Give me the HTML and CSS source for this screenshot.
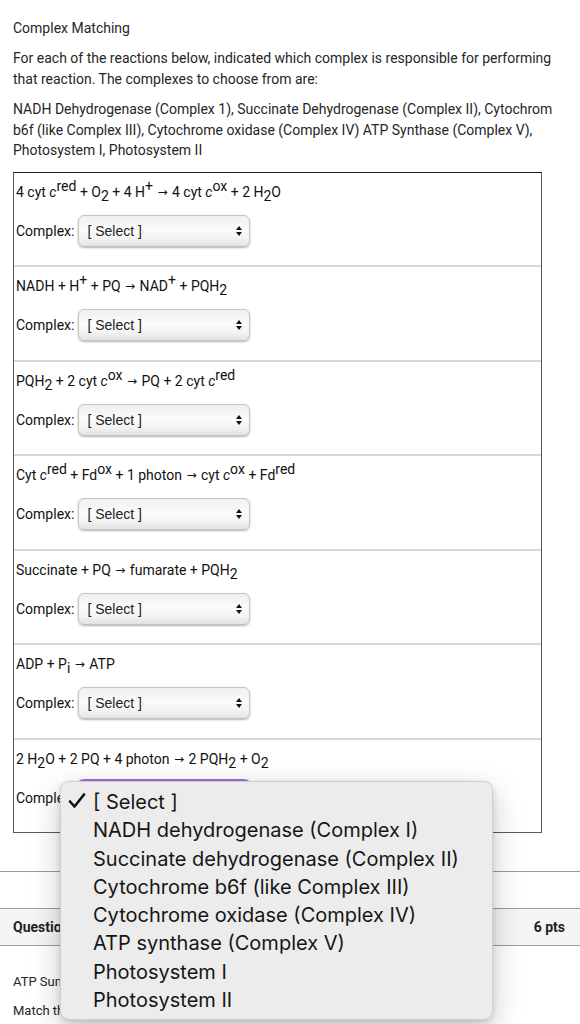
FILE: index.html
```html
<!DOCTYPE html>
<html>
<head>
<meta charset="utf-8">
<link rel="stylesheet" href="styles.css">
</head>
<body>
<div class="page">
  <div class="content">
    <p class="title">Complex Matching</p>
    <p class="para">For each of the reactions below, indicated which complex is responsible for performing that reaction. The complexes to choose from are:</p>
    <p class="para">NADH Dehydrogenase (Complex 1), Succinate Dehydrogenase (Complex II), Cytochrom b6f (like Complex III), Cytochrome oxidase (Complex IV) ATP Synthase (Complex V), Photosystem I, Photosystem II</p>
    <div class="matchbox">
      <div class="row">
        <div class="eq">4 cyt <i>c</i><sup>red</sup> + O<sub>2</sub> + 4 H<sup>+</sup> <span class="arr">→</span> 4 cyt <i>c</i><sup>ox</sup> + 2 H<sub>2</sub>O</div>
        <div class="pick"><span class="lbl">Complex:</span><div class="sel"><span>[ Select ]</span><svg width="8" height="12" viewBox="0 0 8 12"><path d="M1 5 L4 1 L7 5 Z M1 7 L4 11 L7 7 Z" fill="#111"/></svg></div></div>
      </div>
      <div class="row">
        <div class="eq">NADH + H<sup>+</sup> + PQ <span class="arr">→</span> NAD<sup>+</sup> + PQH<sub>2</sub></div>
        <div class="pick"><span class="lbl">Complex:</span><div class="sel"><span>[ Select ]</span><svg width="8" height="12" viewBox="0 0 8 12"><path d="M1 5 L4 1 L7 5 Z M1 7 L4 11 L7 7 Z" fill="#111"/></svg></div></div>
      </div>
      <div class="row">
        <div class="eq">PQH<sub>2</sub> + 2 cyt <i>c</i><sup>ox</sup> <span class="arr">→</span> PQ + 2 cyt <i>c</i><sup>red</sup></div>
        <div class="pick"><span class="lbl">Complex:</span><div class="sel"><span>[ Select ]</span><svg width="8" height="12" viewBox="0 0 8 12"><path d="M1 5 L4 1 L7 5 Z M1 7 L4 11 L7 7 Z" fill="#111"/></svg></div></div>
      </div>
      <div class="row">
        <div class="eq">Cyt <i>c</i><sup>red</sup> + Fd<sup>ox</sup> + 1 photon <span class="arr">→</span> cyt <i>c</i><sup>ox</sup> + Fd<sup>red</sup></div>
        <div class="pick"><span class="lbl">Complex:</span><div class="sel"><span>[ Select ]</span><svg width="8" height="12" viewBox="0 0 8 12"><path d="M1 5 L4 1 L7 5 Z M1 7 L4 11 L7 7 Z" fill="#111"/></svg></div></div>
      </div>
      <div class="row">
        <div class="eq">Succinate + PQ <span class="arr">→</span> fumarate + PQH<sub>2</sub></div>
        <div class="pick"><span class="lbl">Complex:</span><div class="sel"><span>[ Select ]</span><svg width="8" height="12" viewBox="0 0 8 12"><path d="M1 5 L4 1 L7 5 Z M1 7 L4 11 L7 7 Z" fill="#111"/></svg></div></div>
      </div>
      <div class="row">
        <div class="eq">ADP + P<sub>i</sub> <span class="arr">→</span> ATP</div>
        <div class="pick"><span class="lbl">Complex:</span><div class="sel"><span>[ Select ]</span><svg width="8" height="12" viewBox="0 0 8 12"><path d="M1 5 L4 1 L7 5 Z M1 7 L4 11 L7 7 Z" fill="#111"/></svg></div></div>
      </div>
      <div class="row">
        <div class="eq">2 H<sub>2</sub>O + 2 PQ + 4 photon <span class="arr">→</span> 2 PQH<sub>2</sub> + O<sub>2</sub></div>
        <div class="pick"><span class="lbl">Complex:</span><div class="sel focused"><span>[ Select ]</span><svg width="8" height="12" viewBox="0 0 8 12"><path d="M1 5 L4 1 L7 5 Z M1 7 L4 11 L7 7 Z" fill="#111"/></svg></div></div>
      </div>
    </div>
  </div>
  <div class="divider"></div>
  <div class="qhead"><span class="qtitle">Question 6</span><span class="qpts">6 pts</span></div>
  <div class="qbody">
    <p>ATP Summary</p>
    <p>Match the following</p>
  </div>
  <div class="menu">
    <div class="item checked"><svg class="check" width="18" height="16" viewBox="0 0 18 16"><path d="M2 8.5 L6.5 13.5 L16 1.5" fill="none" stroke="#111" stroke-width="2.6" stroke-linecap="round" stroke-linejoin="round"/></svg>[ Select ]</div>
    <div class="item">NADH dehydrogenase (Complex I)</div>
    <div class="item">Succinate dehydrogenase (Complex II)</div>
    <div class="item">Cytochrome b6f (like Complex III)</div>
    <div class="item">Cytochrome oxidase (Complex IV)</div>
    <div class="item">ATP synthase (Complex V)</div>
    <div class="item">Photosystem I</div>
    <div class="item">Photosystem II</div>
  </div>
</div>
</body>
</html>
```
FILE: styles.css
```css
* { box-sizing: border-box; }
body {
  margin: 0;
  font-family: Roboto, "Liberation Sans", sans-serif;
  font-size: 14px;
  color: #262626;
  background: #fff;
}
.page {
  position: relative;
  width: 580px;
  height: 1024px;
  overflow: hidden;
}
.content {
  padding: 18px 8px 0 13px;
}
.title {
  margin: 0;
  line-height: 20px;
}
.para {
  margin: 10px 0 0;
  line-height: 20.5px;
}
.matchbox {
  margin-top: 11px;
  margin-right: 30px;
  border: 1px solid #5a5a5a;
  border-top-color: #1e1e1e;
  color: #111;
}
.row {
  height: 94.5px;
  padding: 9px 0 0 2px;
  border-bottom: 2px solid #d8d8d8;
}
.row:last-child {
  border-bottom: none;
  height: 92.5px;
}
.eq {
  line-height: 20px;
  height: 20px;
  white-space: nowrap;
}
.eq sup, .eq sub {
  font-size: 14px;
  line-height: 0;
}
.eq sup { vertical-align: 6px; }
.eq sub { vertical-align: -4px; }
.arr {
  font-family: "DejaVu Sans", sans-serif;
  font-size: 12px;
  margin: 0 1px;
  vertical-align: 1px;
}
.pick {
  display: flex;
  align-items: center;
  gap: 4px;
  margin-top: 13px;
}
.lbl {
  line-height: 20px;
}
.sel {
  width: 172px;
  height: 32px;
  display: flex;
  align-items: center;
  justify-content: space-between;
  padding: 0 6px 0 8px;
  border: 1px solid #c4c4c4;
  border-radius: 6px;
  background: linear-gradient(#efefef, #fbfbfb 45%, #f3f3f3 75%, #e2e2e2);
  box-shadow: 0 1px 2px rgba(0,0,0,0.3);
  font-family: "Liberation Sans", Arial, sans-serif;
  font-size: 14px;
  color: #222;
}
.sel.focused {
  box-shadow: 0 0 0 3px rgb(157,114,216);
}
.divider {
  margin-top: 38px;
  border-top: 1px solid #9a9a9a;
}
.qhead {
  margin-top: 36px;
  height: 38px;
  display: flex;
  align-items: center;
  justify-content: space-between;
  padding: 0 15px 0 13px;
  background: #f5f5f5;
  border-top: 1px solid #9a9a9a;
  border-bottom: 1px solid #9a9a9a;
  font-weight: 700;
  font-size: 14px;
  color: #222;
}
.qbody {
  padding: 26px 13px 0;
  font-size: 13px;
}
.qbody p {
  margin: 0 0 9px;
  line-height: 20px;
}
.menu {
  position: absolute;
  left: 60px;
  top: 781px;
  width: 433px;
  height: 239px;
  padding: 6px 0 0 32px;
  background: #ececec;
  border: 1px solid #cfcfcf;
  border-radius: 9px;
  box-shadow: 0 10px 30px rgba(0,0,0,0.22), 0 2px 6px rgba(0,0,0,0.12);
  font-family: Inter, "Liberation Sans", sans-serif;
  font-size: 20px;
  color: #161616;
}
.item {
  position: relative;
  line-height: 28.3px;
  height: 28.3px;
  white-space: nowrap;
}
.check {
  position: absolute;
  left: -25px;
  top: 5px;
}
```
